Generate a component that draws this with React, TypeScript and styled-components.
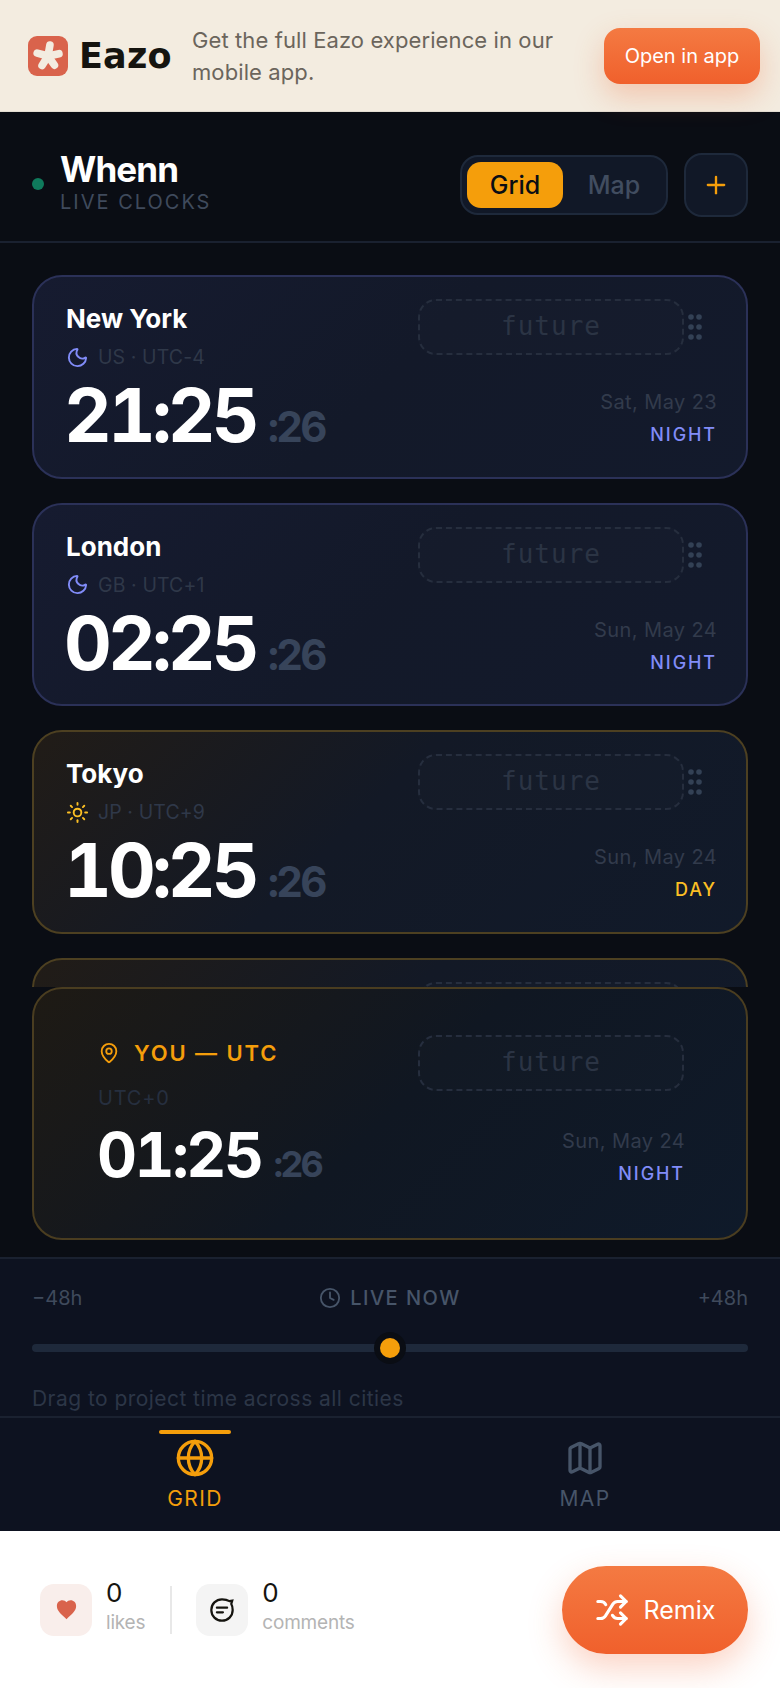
import React from 'react';
import styled, { createGlobalStyle } from 'styled-components';
import { Clock, Globe, Map as MapIcon, MapPin, Moon, Plus, Shuffle, Sun } from 'lucide-react';

const GlobalStyle = createGlobalStyle`
  html, body {
    margin: 0;
    padding: 0;
    background: #0a0d14;
  }
  * {
    box-sizing: border-box;
  }
`;

const sans = `Inter, "Liberation Sans", sans-serif`;

const Page = styled.div`
  width: 780px;
  height: 1688px;
  display: flex;
  flex-direction: column;
  overflow: hidden;
  font-family: ${sans};
`;

const Banner = styled.div`
  position: relative;
  z-index: 2;
  height: 112px;
  flex-shrink: 0;
  display: flex;
  align-items: center;
  padding: 0 20px 0 28px;
  background: #f3ece0;
  border-bottom: 1px solid #e3ddd2;
`;

const Logo = styled.div`
  display: flex;
  align-items: center;
  gap: 11px;
  width: 164px;
  flex-shrink: 0;
`;

const LogoMark = styled.svg`
  width: 40px;
  height: 40px;
  flex-shrink: 0;
`;

const LogoText = styled.span`
  font-family: "DejaVu Sans", sans-serif;
  font-size: 35px;
  font-weight: 700;
  color: #15140f;
  letter-spacing: 0.2px;
`;

const BannerText = styled.p`
  margin: 0;
  width: 380px;
  font-size: 22px;
  line-height: 32px;
  letter-spacing: 0.1px;
  color: #6b655c;
`;

const OpenButton = styled.div`
  margin-left: auto;
  width: 156px;
  height: 56px;
  display: flex;
  align-items: center;
  justify-content: center;
  border-radius: 16px;
  background: linear-gradient(180deg, #f47a42, #f0602c);
  box-shadow: 0 12px 30px rgba(240, 96, 44, 0.28);
  color: #fff;
  font-size: 20px;
`;

const Main = styled.div`
  flex: 1;
  min-height: 0;
  display: flex;
  flex-direction: column;
  background: #0a0d14;
`;

const Header = styled.header`
  height: 131px;
  flex-shrink: 0;
  display: flex;
  align-items: center;
  padding: 17px 32px 0;
  border-bottom: 2px solid #1a2130;
`;

const LiveDot = styled.span`
  width: 12px;
  height: 12px;
  border-radius: 50%;
  background: #0f7a5c;
  margin-top: -3px;
  margin-right: 16px;
`;

const TitleBlock = styled.div`
  display: flex;
  flex-direction: column;
  margin-top: -7px;
`;

const Title = styled.h1`
  margin: 0;
  font-size: 35px;
  line-height: 40px;
  font-weight: 700;
  letter-spacing: -0.9px;
  color: #fff;
`;

const Subtitle = styled.span`
  font-size: 20px;
  line-height: 26px;
  font-weight: 400;
  letter-spacing: 2px;
  color: #3f4a5c;
`;

const ViewSwitch = styled.div`
  margin-left: auto;
  width: 208px;
  height: 60px;
  display: flex;
  padding: 5px;
  border-radius: 18px;
  background: #111827;
  border: 2px solid #1e293b;
`;

const SwitchItem = styled.div<{ $active?: boolean }>`
  width: ${(p) => (p.$active ? '98px' : '100px')};
  display: flex;
  align-items: center;
  justify-content: center;
  padding-left: ${(p) => (p.$active ? '0' : '4px')};
  border-radius: 14px;
  font-size: 25px;
  font-weight: 500;
  background: ${(p) => (p.$active ? '#f59e0b' : 'transparent')};
  color: ${(p) => (p.$active ? '#0a0d14' : '#414d60')};
`;

const AddButton = styled.div`
  margin-left: 16px;
  width: 64px;
  height: 64px;
  display: flex;
  align-items: center;
  justify-content: center;
  border-radius: 18px;
  background: #111827;
  border: 2px solid #1e293b;
  color: #f59e0b;
`;

const List = styled.div`
  height: 744px;
  flex-shrink: 0;
  overflow: hidden;
  padding: 32px 32px 0;
  display: flex;
  flex-direction: column;
  gap: 24px;
`;

const Card = styled.div<{ $day?: boolean }>`
  height: 203.5px;
  flex-shrink: 0;
  display: flex;
  justify-content: space-between;
  padding: 24px 29px 0 32px;
  border-radius: 30px;
  border: 2px solid ${(p) => (p.$day ? '#4d4021' : '#2b3158')};
  background: ${(p) =>
    p.$day
      ? 'linear-gradient(135deg, #211c17 0%, #131926 45%, #111a2a 100%)'
      : 'linear-gradient(135deg, #161b30 0%, #131929 50%, #131a2c 100%)'};
`;

const PinnedCard = styled.div`
  margin: 0 32px;
  height: 253px;
  flex-shrink: 0;
  display: flex;
  justify-content: space-between;
  padding: 46px 61px 0 64px;
  border-radius: 30px;
  border: 2px solid #4a3d20;
  background: linear-gradient(135deg, #1e1a14 0%, #101722 50%, #0f1a2a 100%);
`;

const LeftCol = styled.div`
  display: flex;
  flex-direction: column;
  align-items: flex-start;
`;

const RightCol = styled.div`
  display: flex;
  flex-direction: column;
  align-items: flex-end;
`;

const CityName = styled.div`
  font-size: 26px;
  line-height: 36px;
  font-weight: 700;
  color: #fff;
`;

const YouLabel = styled.div`
  display: flex;
  align-items: center;
  gap: 14px;
  font-size: 22px;
  line-height: 36px;
  font-weight: 600;
  letter-spacing: 1.9px;
  color: #f59e0b;
`;

const Meta = styled.div<{ $pinned?: boolean }>`
  display: flex;
  align-items: center;
  gap: 9px;
  margin-top: ${(p) => (p.$pinned ? '9px' : '2px')};
  height: 36px;
  font-size: ${(p) => (p.$pinned ? '20px' : '19.5px')};
  letter-spacing: ${(p) => (p.$pinned ? '0.8px' : '0.1px')};
  color: ${(p) => (p.$pinned ? '#262f3f' : '#2f3849')};
`;

const TimeRow = styled.div<{ $pinned?: boolean }>`
  display: flex;
  align-items: baseline;
  gap: 12px;
  margin-top: ${(p) => (p.$pinned ? '1px' : '-2px')};
  margin-left: ${(p) => (p.$pinned ? '-1px' : '-2px')};
  font-variant-numeric: tabular-nums;
`;

const Time = styled.span<{ $pinned?: boolean }>`
  font-size: ${(p) => (p.$pinned ? '62px' : '74px')};
  line-height: ${(p) => (p.$pinned ? '76px' : '84px')};
  font-weight: 700;
  letter-spacing: ${(p) => (p.$pinned ? '-2.5px' : '-3.9px')};
  color: #fff;
`;

const Seconds = styled.span<{ $pinned?: boolean }>`
  font-size: ${(p) => (p.$pinned ? '36px' : '42px')};
  font-weight: 700;
  letter-spacing: -3px;
  color: #37445a;
`;

const ChipRow = styled.div<{ $pinned?: boolean }>`
  display: flex;
  align-items: center;
  gap: 4px;
  margin-top: ${(p) => (p.$pinned ? '0' : '-2px')};
  margin-right: ${(p) => (p.$pinned ? '1px' : '15px')};
`;

const FutureChip = styled.div`
  width: 266px;
  height: 56px;
  display: flex;
  align-items: center;
  justify-content: center;
  padding-bottom: 2px;
  border: 2px dashed #262e3e;
  border-radius: 18px;
  background: rgba(255, 255, 255, 0.012);
  font-family: "DejaVu Sans Mono", "Liberation Mono", monospace;
  font-size: 26px;
  letter-spacing: 1px;
  color: #2b3444;
`;

const GripDots = styled.svg`
  width: 14px;
  height: 26px;
`;

const DateText = styled.div<{ $pinned?: boolean }>`
  margin-top: ${(p) => (p.$pinned ? '35px' : '32px')};
  font-size: 20px;
  line-height: 30px;
  letter-spacing: 0.4px;
  color: #323b4c;
  text-align: right;
`;

const PhaseText = styled.div<{ $day?: boolean }>`
  margin-top: 4px;
  font-size: 18px;
  line-height: 28px;
  font-weight: 500;
  letter-spacing: 1.9px;
  color: ${(p) => (p.$day ? '#fbbf24' : '#818cf8')};
`;

const SliderPanel = styled.div`
  margin-top: 17px;
  flex: 1;
  min-height: 0;
  padding: 0 32px;
  background: #0d1220;
  border-top: 2px solid #1a2130;
  display: flex;
  flex-direction: column;
  overflow: hidden;
`;

const SliderLabels = styled.div`
  display: flex;
  align-items: center;
  justify-content: space-between;
  margin-top: 24px;
  height: 30px;
  font-size: 20px;
  color: #3f4a5c;
`;

const LiveLabel = styled.div`
  display: flex;
  align-items: center;
  gap: 9px;
  font-weight: 500;
  letter-spacing: 1.5px;
  color: #475569;
`;

const Track = styled.div`
  position: relative;
  margin-top: 31px;
  height: 8px;
  flex-shrink: 0;
  border-radius: 4px;
  background: #1e293b;
`;

const Thumb = styled.span`
  position: absolute;
  left: 50%;
  top: 50%;
  width: 20px;
  height: 20px;
  transform: translate(-50%, -50%);
  border-radius: 50%;
  background: #f59e0b;
  box-shadow: 0 0 0 6px #0a0d14;
`;

const Hint = styled.div`
  margin-top: 32px;
  font-size: 21px;
  line-height: 30px;
  letter-spacing: 0.45px;
  color: #2c3647;
`;

const TabBar = styled.nav`
  height: 115px;
  flex-shrink: 0;
  display: grid;
  grid-template-columns: 1fr 1fr;
  background: #0d1220;
  border-top: 2px solid #1a2130;
`;

const Tab = styled.div<{ $active?: boolean }>`
  position: relative;
  display: flex;
  flex-direction: column;
  align-items: center;
  padding-top: 20px;
  gap: 6px;
  font-size: 21px;
  line-height: 30px;
  font-weight: 400;
  letter-spacing: 1.4px;
  color: ${(p) => (p.$active ? '#f59e0b' : '#475569')};
`;

const TabMark = styled.span`
  position: absolute;
  top: 12px;
  left: 50%;
  width: 72px;
  height: 4px;
  margin-left: -36px;
  border-radius: 2px;
  background: #f59e0b;
`;

const Footer = styled.footer`
  height: 157px;
  flex-shrink: 0;
  display: flex;
  align-items: center;
  padding: 0 32px 0 40px;
  background: #fff;
`;

const Stat = styled.div`
  display: flex;
  align-items: center;
  gap: 14px;
`;

const StatIcon = styled.div<{ $tint: string }>`
  width: 52px;
  height: 52px;
  display: flex;
  align-items: center;
  justify-content: center;
  border-radius: 14px;
  background: ${(p) => p.$tint};
`;

const StatText = styled.div`
  display: flex;
  flex-direction: column;
  margin-top: -8px;
`;

const StatCount = styled.span`
  font-size: 26px;
  line-height: 34px;
  color: #15140f;
`;

const StatLabel = styled.span`
  font-size: 19px;
  line-height: 26px;
  letter-spacing: -0.2px;
  color: #b4b4b4;
`;

const Divider = styled.span`
  width: 2px;
  height: 48px;
  margin: 0 24px 0 25px;
  background: #e8e8e8;
`;

const RemixButton = styled.div`
  margin-left: auto;
  width: 186px;
  height: 88px;
  display: flex;
  align-items: center;
  justify-content: center;
  gap: 15px;
  border-radius: 44px;
  background: linear-gradient(180deg, #f47a42, #f0602c);
  box-shadow: 0 14px 34px rgba(240, 96, 44, 0.28);
  color: #fff;
  font-size: 25px;
`;

type City = {
  name: string;
  icon: 'moon' | 'sun';
  meta: string;
  time: string;
  date: string;
  day?: boolean;
};

const cities: City[] = [
  { name: 'New York', icon: 'moon', meta: 'US · UTC-4', time: '21:25', date: 'Sat, May 23' },
  { name: 'London', icon: 'moon', meta: 'GB · UTC+1', time: '02:25', date: 'Sun, May 24' },
  { name: 'Tokyo', icon: 'sun', meta: 'JP · UTC+9', time: '10:25', date: 'Sun, May 24', day: true },
];

const Grip = () => (
  <GripDots viewBox="0 0 14 26" fill="#334155">
    {[3, 13, 23].map((y) => (
      <React.Fragment key={y}>
        <circle cx="3" cy={y} r="2.8" />
        <circle cx="11" cy={y} r="2.8" />
      </React.Fragment>
    ))}
  </GripDots>
);

const CityCard = ({ city }: { city: City }) => (
  <Card $day={city.day}>
    <LeftCol>
      <CityName>{city.name}</CityName>
      <Meta>
        {city.icon === 'moon' ? (
          <Moon size={23} color="#818cf8" strokeWidth={2} />
        ) : (
          <Sun size={23} color="#fbbf24" strokeWidth={2} />
        )}
        {city.meta}
      </Meta>
      <TimeRow>
        <Time>{city.time}</Time>
        <Seconds>:26</Seconds>
      </TimeRow>
    </LeftCol>
    <RightCol>
      <ChipRow>
        <FutureChip>future</FutureChip>
        <Grip />
      </ChipRow>
      <DateText>{city.date}</DateText>
      <PhaseText $day={city.day}>{city.day ? 'DAY' : 'NIGHT'}</PhaseText>
    </RightCol>
  </Card>
);

export default function App() {
  return (
    <Page>
      <GlobalStyle />
      <Banner>
        <Logo>
          <LogoMark viewBox="0 0 40 40">
            <rect width="40" height="40" rx="9" fill="#d9634c" />
            <g fill="#f3ece0">
              <rect x="16.2" y="5" width="7.6" height="16" rx="3.8" transform="rotate(10 20 20)" />
              <rect x="16.2" y="5" width="7.6" height="16" rx="3.8" transform="rotate(78 20 20)" />
              <rect x="16.2" y="5" width="7.6" height="16" rx="3.8" transform="rotate(145 20 20)" />
              <rect x="16.2" y="5" width="7.6" height="16" rx="3.8" transform="rotate(212 20 20)" />
              <rect x="16.2" y="5" width="7.6" height="16" rx="3.8" transform="rotate(285 20 20)" />
            </g>
          </LogoMark>
          <LogoText>Eazo</LogoText>
        </Logo>
        <BannerText>Get the full Eazo experience in our mobile app.</BannerText>
        <OpenButton>Open in app</OpenButton>
      </Banner>
      <Main>
        <Header>
          <LiveDot />
          <TitleBlock>
            <Title>Whenn</Title>
            <Subtitle>LIVE CLOCKS</Subtitle>
          </TitleBlock>
          <ViewSwitch>
            <SwitchItem $active>Grid</SwitchItem>
            <SwitchItem>Map</SwitchItem>
          </ViewSwitch>
          <AddButton>
            <Plus size={28} strokeWidth={2} />
          </AddButton>
        </Header>
        <List>
          {cities.map((city) => (
            <CityCard key={city.name} city={city} />
          ))}
          {/* the fourth card is scrolled away, only its top edge and chip outline show */}
          <Card $day>
            <LeftCol />
            <RightCol>
              <ChipRow>
                <FutureChip />
                <GripDots />
              </ChipRow>
            </RightCol>
          </Card>
        </List>
        <PinnedCard>
          <LeftCol>
            <YouLabel>
              <MapPin size={22} strokeWidth={2} />
              YOU — UTC
            </YouLabel>
            <Meta $pinned>UTC+0</Meta>
            <TimeRow $pinned>
              <Time $pinned>01:25</Time>
              <Seconds $pinned>:26</Seconds>
            </TimeRow>
          </LeftCol>
          <RightCol>
            <ChipRow $pinned>
              <FutureChip>future</FutureChip>
            </ChipRow>
            <DateText $pinned>Sun, May 24</DateText>
            <PhaseText>NIGHT</PhaseText>
          </RightCol>
        </PinnedCard>
        <SliderPanel>
          <SliderLabels>
            <span>−48h</span>
            <LiveLabel>
              <Clock size={22} strokeWidth={2} />
              LIVE NOW
            </LiveLabel>
            <span>+48h</span>
          </SliderLabels>
          <Track>
            <Thumb />
          </Track>
          <Hint>Drag to project time across all cities</Hint>
        </SliderPanel>
        <TabBar>
          <Tab $active>
            <TabMark />
            <Globe size={40} strokeWidth={2} />
            GRID
          </Tab>
          <Tab>
            <MapIcon size={40} strokeWidth={2} />
            MAP
          </Tab>
        </TabBar>
      </Main>
      <Footer>
        <Stat>
          <StatIcon $tint="#f9eeeb">
            <svg width="21" height="21" viewBox="0 0 24 24" fill="#d9634c">
              <path d="M12 23 C7 18 1 14 1 8 C1 4 4 1.5 7.2 1.5 C9.2 1.5 11 2.4 12 3.8 C13 2.4 14.8 1.5 16.8 1.5 C20 1.5 23 4 23 8 C23 14 17 18 12 23 Z" />
            </svg>
          </StatIcon>
          <StatText>
            <StatCount>0</StatCount>
            <StatLabel>likes</StatLabel>
          </StatText>
        </Stat>
        <Divider />
        <Stat>
          <StatIcon $tint="#f4f4f4">
            <svg width="26" height="26" viewBox="0 0 28 28" fill="none" stroke="#15140f" strokeWidth="2.4" strokeLinecap="round">
              <path d="M22 4.5 L25 4 L24 7.5 C25 9.2 25.5 11.2 25.5 14 C25.5 20.5 20.5 25.5 14 25.5 C7.5 25.5 2.5 20.5 2.5 14 C2.5 7.5 7.5 2.5 14 2.5 C17 2.5 20 3.2 22 4.5 Z" />
              <path d="M8.5 11.5 H19.5 M8.5 16.5 H15" />
            </svg>
          </StatIcon>
          <StatText>
            <StatCount>0</StatCount>
            <StatLabel>comments</StatLabel>
          </StatText>
        </Stat>
        <RemixButton>
          <Shuffle size={34} strokeWidth={2.2} />
          Remix
        </RemixButton>
      </Footer>
    </Page>
  );
}
